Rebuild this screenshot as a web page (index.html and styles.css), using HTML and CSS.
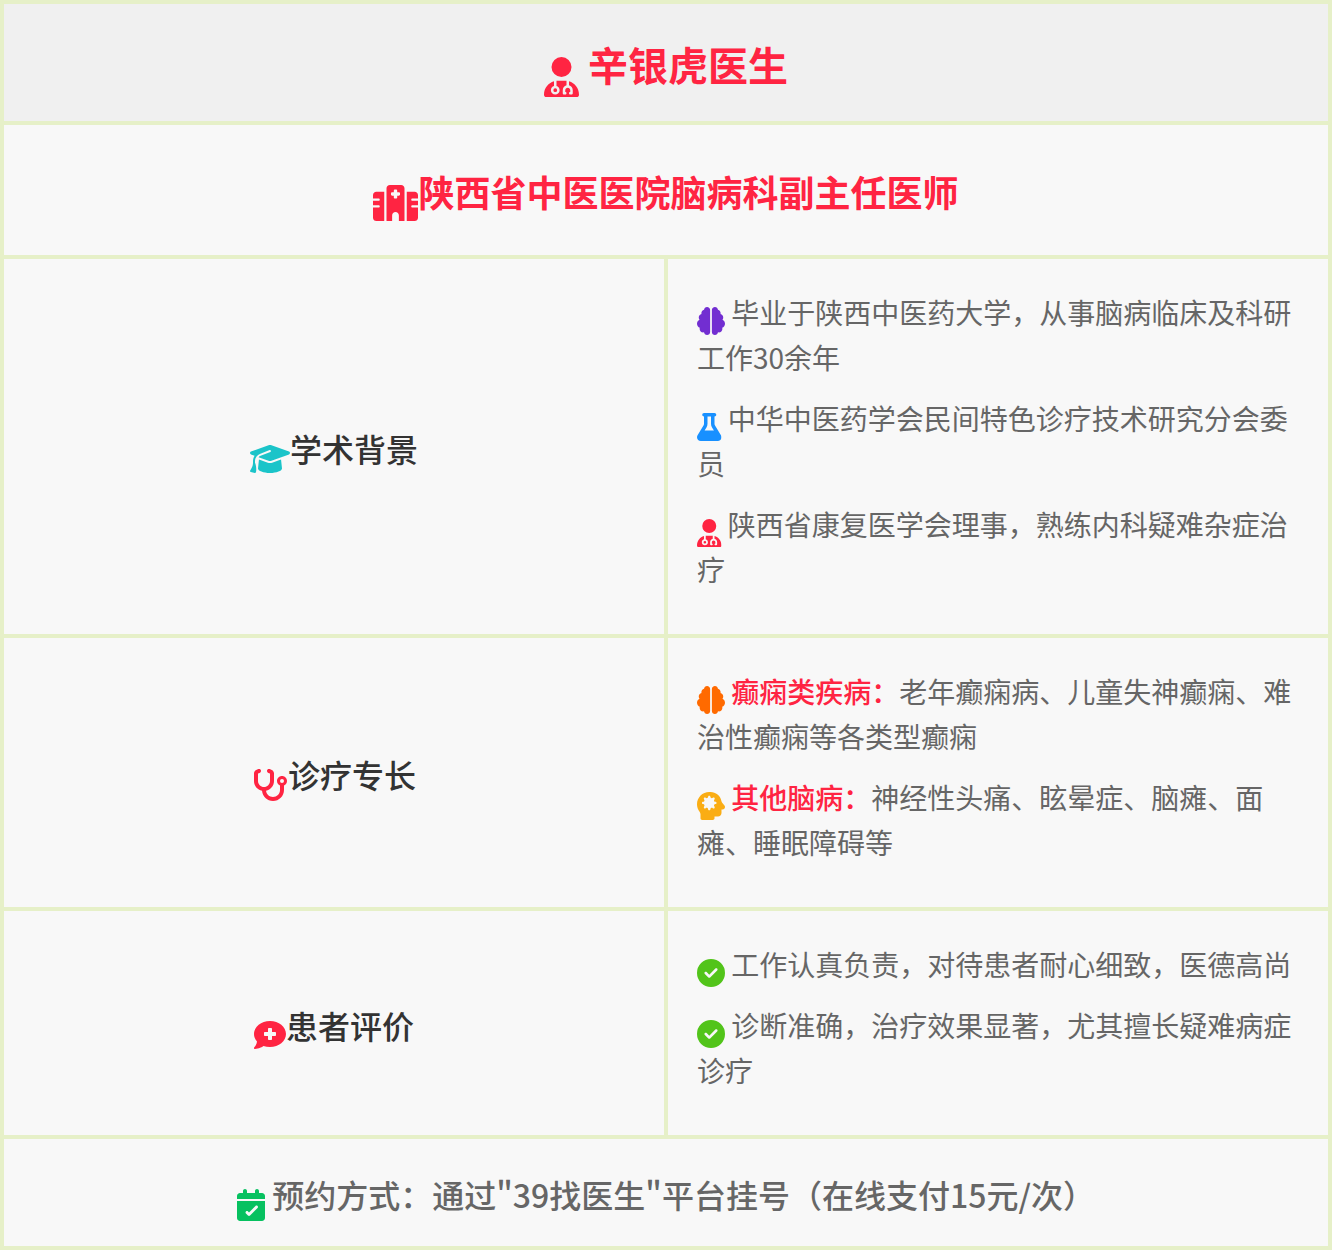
FILE: index.html
```html
<!DOCTYPE html>
<html lang="zh">
<head>
<meta charset="utf-8">
<title>辛银虎医生</title>
<link rel="stylesheet" href="styles.css">
</head>
<body>
<svg class="defs" width="0" height="0" aria-hidden="true">
  <symbol id="i-doctor" viewBox="0 0 448 512"><path d="M224 256A128 128 0 1 0 224 0a128 128 0 1 0 0 256zm-96 55.2C54 332.9 0 401.3 0 482.3C0 498.7 13.3 512 29.7 512H418.3c16.4 0 29.7-13.3 29.7-29.7c0-81-54-149.4-128-171.1V362c27.6 7.1 48 32.2 48 62v40c0 8.8-7.2 16-16 16H336c-8.8 0-16-7.2-16-16s7.2-16 16-16V424c0-17.7-14.3-32-32-32s-32 14.3-32 32v24c8.8 0 16 7.2 16 16s-7.2 16-16 16H256c-8.8 0-16-7.2-16-16V424c0-29.8 20.4-54.9 48-62V304.9c-6-.6-12.1-.9-18.3-.9H178.3c-6.2 0-12.3 .3-18.3 .9v65.4c23.1 6.9 40 28.3 40 53.7c0 30.9-25.1 56-56 56s-56-25.1-56-56c0-25.4 16.9-46.8 40-53.7V311.2zM144 448a24 24 0 1 0 0-48 24 24 0 1 0 0 48z"/></symbol>
  <symbol id="i-hospital" viewBox="0 0 640 512"><path d="M192 48c0-26.5 21.5-48 48-48H400c26.5 0 48 21.5 48 48V512H368V432c0-26.5-21.5-48-48-48s-48 21.5-48 48v80H192V48zM48 96H160V512H48c-26.5 0-48-21.5-48-48V320H80c8.8 0 16-7.2 16-16s-7.2-16-16-16H0V224H80c8.8 0 16-7.2 16-16s-7.2-16-16-16H0V144c0-26.5 21.5-48 48-48zm544 0c26.5 0 48 21.5 48 48v48H560c-8.8 0-16 7.2-16 16s7.2 16 16 16h80v64H560c-8.8 0-16 7.2-16 16s7.2 16 16 16h80V464c0 26.5-21.5 48-48 48H480V96H592zM312 64c-8.8 0-16 7.2-16 16v24H272c-8.8 0-16 7.2-16 16v16c0 8.8 7.2 16 16 16h24v24c0 8.8 7.2 16 16 16h16c8.8 0 16-7.2 16-16V152h24c8.8 0 16-7.2 16-16V120c0-8.8-7.2-16-16-16H344V80c0-8.8-7.2-16-16-16H312z"/></symbol>
  <symbol id="i-brain" viewBox="0 0 512 512"><path d="M184 0c30.9 0 56 25.1 56 56V456c0 30.9-25.1 56-56 56c-28.9 0-52.7-21.9-55.7-50.1c-5.2 1.4-10.7 2.1-16.3 2.1c-35.3 0-64-28.7-64-64c0-7.4 1.3-14.6 3.6-21.2C21.4 367.4 0 338.2 0 304c0-31.9 18.7-59.5 45.8-72.3C37.1 220.8 32 207 32 192c0-30.7 21.6-56.3 50.4-62.6C80.8 123.9 80 118 80 112c0-29.9 20.6-55.1 48.3-62.1C131.3 21.9 155.1 0 184 0zM328 0c28.9 0 52.6 21.9 55.7 49.9c27.8 7 48.3 32.1 48.3 62.1c0 6-.8 11.9-2.4 17.4c28.8 6.2 50.4 31.9 50.4 62.6c0 15-5.1 28.8-13.8 39.7C493.3 244.5 512 272.1 512 304c0 34.2-21.4 63.4-51.6 74.8c2.3 6.6 3.6 13.8 3.6 21.2c0 35.3-28.7 64-64 64c-5.6 0-11.1-.7-16.3-2.1c-3 28.2-26.8 50.1-55.7 50.1c-30.9 0-56-25.1-56-56V56c0-30.9 25.1-56 56-56z"/></symbol>
  <symbol id="i-flask" viewBox="0 0 448 512"><path d="M288 0H160 128C110.3 0 96 14.3 96 32s14.3 32 32 32V196.8c0 11.8-3.3 23.5-9.5 33.5L10.3 406.2C3.6 417.2 0 429.7 0 442.6C0 480.9 31.1 512 69.4 512H378.6c38.3 0 69.4-31.1 69.4-69.4c0-12.8-3.6-25.4-10.3-36.4L329.5 230.4c-6.2-10.1-9.5-21.7-9.5-33.5V64c17.7 0 32-14.3 32-32s-14.3-32-32-32H288zM192 196.8V64h64V196.8c0 23.7 6.6 46.9 19 67.1L309.5 320h-171L173 263.9c12.4-20.2 19-43.4 19-67.1z"/></symbol>
  <symbol id="i-virus" viewBox="0 0 512 512"><path d="M0 224.2C0 100.6 100.2 0 224 0h24c95.2 0 181.2 69.3 197.3 160.2c2.3 13 6.8 25.7 15.1 36l42 52.6c6.2 7.8 9.6 17.4 9.6 27.4c0 24.2-19.6 43.8-43.8 43.8H448v64c0 35.3-28.7 64-64 64H320v32c0 17.7-14.3 32-32 32H96c-17.7 0-32-14.3-32-32V407.3c0-16.7-6.9-32.5-17.1-45.8C16.6 322.4 0 274.1 0 224.2z"/><path fill="#f8f8f8" fill-rule="evenodd" transform="translate(224 192) scale(1.3) translate(-224 -192)" d="M224 96c-8.8 0-16 7.2-16 16c0 17.8-21.5 26.7-34.1 14.1c-6.2-6.2-16.4-6.2-22.6 0s-6.2 16.4 0 22.6c12.6 12.6 3.7 34.1-14.1 34.1c-8.8 0-16 7.2-16 16s7.2 16 16 16c17.8 0 26.7 21.5 14.1 34.1c-6.2 6.2-6.2 16.4 0 22.6s16.4 6.2 22.6 0c12.6-12.6 34.1-3.7 34.1 14.1c0 8.8 7.2 16 16 16s16-7.2 16-16c0-17.8 21.5-26.7 34.1-14.1c6.2 6.2 16.4 6.2 22.6 0s6.2-16.4 0-22.6c-12.6-12.6-3.7-34.1 14.1-34.1c8.8 0 16-7.2 16-16s-7.2-16-16-16c-17.8 0-26.7-21.5-14.1-34.1c6.2-6.2 6.2-16.4 0-22.6s-16.4-6.2-22.6 0C261.5 138.7 240 129.8 240 112c0-8.8-7.2-16-16-16z"/></symbol>
  <symbol id="i-cap" viewBox="0 0 640 512"><path d="M320 32c-8.1 0-16.1 1.4-23.7 4.1L15.8 137.4C6.3 140.9 0 149.9 0 160s6.3 19.1 15.8 22.6l57.9 20.9C57.3 229.3 48 259.8 48 291.9v28.1c0 28.4-10.8 57.7-22.3 80.8c-6.5 13-13.9 25.8-22.5 37.6C0 442.7-.9 448.3 .9 453.4s6 8.9 11.2 10.2l64 16c4.2 1.1 8.7 .3 12.4-2s6.3-6.1 7.1-10.4c8.6-42.8 4.3-81.2-2.1-108.7C90.3 344.3 86 329.8 80 316.5V291.9c0-30.2 10.2-58.7 27.9-81.5c12.9-15.5 29.6-28 49.2-35.7l157-61.7c8.2-3.2 17.5 .8 20.7 9s-.8 17.5-9 20.7l-157 61.7c-12.4 4.9-23.3 12.4-32.2 21.6l159.6 57.6c7.6 2.7 15.6 4.1 23.7 4.1s16.1-1.4 23.7-4.1L624.2 182.6c9.5-3.4 15.8-12.5 15.8-22.6s-6.3-19.1-15.8-22.6L343.7 36.1C336.1 33.4 328.1 32 320 32zM128 408c0 35.3 86 72 192 72s192-36.7 192-72L496.7 262.6 354.5 314c-11.1 4-22.8 6-34.5 6s-23.5-2-34.5-6L143.3 262.6 128 408z"/></symbol>
  <symbol id="i-steth" viewBox="0 0 576 512"><path d="M142.4 21.9c5.6 16.8-3.5 34.9-20.2 40.5L96 71.1V192c0 53 43 96 96 96s96-43 96-96V71.1l-26.1-8.7c-16.8-5.6-25.8-23.7-20.2-40.5s23.7-25.8 40.5-20.2l26.1 8.7C334.4 19.1 352 43.5 352 71.1V192c0 77.2-54.6 141.6-127.3 156.7C231 404.6 278.4 448 336 448c61.9 0 112-50.1 112-112V265.3c-28.3-12.3-48-40.5-48-73.3c0-44.2 35.8-80 80-80s80 35.8 80 80c0 32.8-19.7 61-48 73.3V336c0 97.2-78.8 176-176 176c-92.9 0-168.9-71.9-175.5-163.1C87.2 334.2 32 269.6 32 192V71.1c0-27.5 17.6-52 43.8-60.7l26.1-8.7c16.8-5.6 34.9 3.5 40.5 20.2zM480 224a32 32 0 1 0 0-64 32 32 0 1 0 0 64z"/></symbol>
  <symbol id="i-comment" viewBox="0 0 512 512"><path d="M256 448c141.4 0 256-93.1 256-208S397.4 32 256 32S0 125.1 0 240c0 45.1 17.7 86.8 47.7 120.9c-1.9 24.5-11.4 46.3-21.4 62.9c-5.5 9.2-11.1 16.6-15.2 21.6c-2.1 2.5-3.7 4.4-4.9 5.7c-.6 .6-1 1.1-1.3 1.4l-.3 .3 0 0 0 0 0 0 0 0c-4.6 4.6-5.9 11.4-3.4 17.4c2.5 6 8.3 9.9 14.8 9.9c28.7 0 57.6-8.9 81.6-19.3c22.9-9.9 42.4-21.9 54.3-30.6c31.8 11.5 67 17.9 104.1 17.9zM224 160c0-8.8 7.2-16 16-16h32c8.8 0 16 7.2 16 16v48h48c8.8 0 16 7.2 16 16v32c0 8.8-7.2 16-16 16H288v48c0 8.8-7.2 16-16 16H240c-8.8 0-16-7.2-16-16V272H176c-8.8 0-16-7.2-16-16V224c0-8.8 7.2-16 16-16h48V160z"/></symbol>
  <symbol id="i-calendar" viewBox="0 0 448 512"><path d="M128 0c17.7 0 32 14.3 32 32V64H288V32c0-17.7 14.3-32 32-32s32 14.3 32 32V64h48c26.5 0 48 21.5 48 48v48H0V112C0 85.5 21.5 64 48 64H96V32c0-17.7 14.3-32 32-32zM0 192H448V464c0 26.5-21.5 48-48 48H48c-26.5 0-48-21.5-48-48V192zM329 305c9.4-9.4 9.4-24.6 0-33.9s-24.6-9.4-33.9 0l-103 103L177 359c-9.4-9.4-24.6-9.4-33.9 0s-9.4 24.6 0 33.9l32 32c9.4 9.4 24.6 9.4 33.9 0L329 305z"/></symbol>
  <symbol id="i-check" viewBox="0 0 512 512"><path d="M256 512A256 256 0 1 0 256 0a256 256 0 1 0 0 512zM369 209L241 337c-9.4 9.4-24.6 9.4-33.9 0l-64-64c-9.4-9.4-9.4-24.6 0-33.9s24.6-9.4 33.9 0l47 47L335 175c9.4-9.4 24.6-9.4 33.9 0s9.4 24.6 0 33.9z"/></symbol>
</svg>

<main class="card">
  <h1 class="cell span head centered title"><span><svg class="ico w448 red"><use href="#i-doctor"/></svg> 辛银虎医生</span></h1>
  <h2 class="cell span centered subtitle"><span><svg class="ico w640 red"><use href="#i-hospital"/></svg>陕西省中医医院脑病科副主任医师</span></h2>

  <div class="cell centered label"><span><svg class="ico w640 teal"><use href="#i-cap"/></svg>学术背景</span></div>
  <div class="cell detail">
    <p><svg class="ico w512 purple"><use href="#i-brain"/></svg> 毕业于陕西中医药大学，从事脑病临床及科研工作30余年</p>
    <p><svg class="ico w448 blue"><use href="#i-flask"/></svg> 中华中医药学会民间特色诊疗技术研究分会委员</p>
    <p><svg class="ico w448 red"><use href="#i-doctor"/></svg> 陕西省康复医学会理事，熟练内科疑难杂症治疗</p>
  </div>

  <div class="cell centered label"><span><svg class="ico w576 red"><use href="#i-steth"/></svg>诊疗专长</span></div>
  <div class="cell detail">
    <p><svg class="ico w512 orange"><use href="#i-brain"/></svg> <strong>癫痫类疾病：</strong>老年癫痫病、儿童失神癫痫、难治性癫痫等各类型癫痫</p>
    <p><svg class="ico w512 amber"><use href="#i-virus"/></svg> <strong>其他脑病：</strong>神经性头痛、眩晕症、脑瘫、面瘫、睡眠障碍等</p>
  </div>

  <div class="cell centered label"><span><svg class="ico w512 red"><use href="#i-comment"/></svg>患者评价</span></div>
  <div class="cell detail">
    <p><svg class="ico w512 green"><use href="#i-check"/></svg> 工作认真负责，对待患者耐心细致，医德高尚</p>
    <p><svg class="ico w512 green"><use href="#i-check"/></svg> 诊断准确，治疗效果显著，尤其擅长疑难病症诊疗</p>
  </div>

  <div class="cell span centered foot"><span><svg class="ico w448 mint"><use href="#i-calendar"/></svg> 预约方式：通过"39找医生"平台挂号（在线支付15元/次）</span></div>
</main>
</body>
</html>
```

FILE: styles.css
```css
* { box-sizing: border-box; }
html, body { margin: 0; padding: 0; background: #fff; }
body { font-family: "Noto Sans CJK SC", "Noto Sans", sans-serif; }
.defs { position: absolute; }

.card {
  display: grid;
  grid-template-columns: 660px 660px;
  grid-template-rows: 117px 130px 375px 269px 224px 107px;
  gap: 4px;
  width: 1328px;
  box-sizing: content-box;
  padding: 4px;
  background: #e6f0c8;
}

.cell { margin: 0; background: #f8f8f8; }
.span { grid-column: 1 / -1; }
.head { background: #f0f0f0; }

.centered {
  display: flex;
  align-items: center;
  justify-content: center;
  text-align: center;
  white-space: pre;
}
.title { padding-top: 11px; font-size: 40px; line-height: 50px; font-weight: 700; color: #ff2442; }
.subtitle { padding-top: 5px; font-size: 36px; line-height: 54px; font-weight: 700; color: #ff2442; }
.subtitle .ico { vertical-align: -0.375em; }
.label { padding-top: 7px; font-size: 32px; line-height: 46px; font-weight: 500; color: #333; }
.foot { padding-top: 7px; font-size: 32px; line-height: 46px; font-weight: 500; color: #666; }

.detail { padding: 31px 31px 26px 29px; font-size: 28px; line-height: 44.8px; color: #666; }
.detail p { margin: 0 0 16px; }
.detail strong { font-weight: 500; color: #ff2442; }

.ico { display: inline-block; height: 1em; vertical-align: -0.4em; fill: currentColor; }
.w448 { width: 0.875em; }
.w512 { width: 1em; }
.w576 { width: 1.125em; }
.w640 { width: 1.25em; }

.red { color: #ff2442; }
.teal { color: #1bc4c9; }
.purple { color: #722ed1; }
.blue { color: #1890ff; }
.orange { color: #ff6a00; }
.amber { color: #faad14; }
.green { color: #52c41a; }
.mint { color: #07c160; }
```
